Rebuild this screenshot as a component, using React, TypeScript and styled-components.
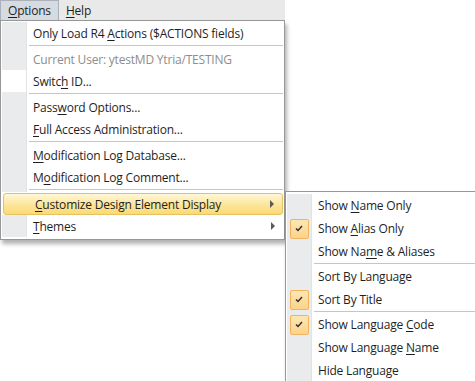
import { FC, ReactNode } from 'react';
import styled, { createGlobalStyle, css } from 'styled-components';

const GlobalStyle = createGlobalStyle`
  html, body {
    margin: 0;
    padding: 0;
    background: #ffffff;
  }

  body {
    font-family: 'Open Sans', 'Noto Sans', sans-serif;
    font-size: 12px;
    letter-spacing: -0.2px;
    color: #1f1f1f;
  }
`;

const Page = styled.div`
  width: 475px;
  height: 381px;
  overflow: hidden;
  position: relative;
`;

const MenuBar = styled.div`
  width: 285px;
  height: 20px;
  display: flex;
  align-items: stretch;
  background: #e9e9e9;
`;

const BarItem = styled.div<{ $open?: boolean }>`
  display: flex;
  align-items: center;
  padding: 0 7px;
  box-sizing: border-box;
  ${(p) =>
    p.$open &&
    css`
      background: #d6dae1;
      border: 1px solid #a9b0ba;
      border-bottom: none;
    `}
`;

const Dropdown = styled.div`
  position: relative;
  width: 285px;
  box-sizing: border-box;
  background: #ffffff;
  border: 1px solid #979797;
  padding: 1px 1px 2px;
  box-shadow: 2px 4px 4px rgba(0, 0, 0, 0.3);
`;

const Row = styled.div<{ $hot?: boolean }>`
  position: relative;
  display: flex;
  height: 22px;
  align-items: stretch;
  ${(p) =>
    p.$hot &&
    css`
      margin: 1px 0 0 1px;
      border: 1px solid #e5c365;
      border-radius: 3px;
      background: linear-gradient(#fff7d6, #fde59a 55%, #fbd974);
      height: 20px;
    `}
`;

const Gutter = styled.div<{ $blank?: boolean; $hot?: boolean }>`
  width: 24px;
  flex: none;
  display: flex;
  align-items: center;
  justify-content: center;
  background: ${(p) => (p.$hot ? 'transparent' : p.$blank ? '#ffffff' : '#e9ebed')};
  border-right: 1px solid ${(p) => (p.$hot ? 'transparent' : '#e2e3e3')};
`;

const Label = styled.div<{ $disabled?: boolean }>`
  flex: 1;
  display: flex;
  align-items: center;
  padding-left: 6px;
  white-space: pre;
  color: ${(p) => (p.$disabled ? '#8d8d8d' : '#1f1f1f')};
`;

const Arrow = styled.span`
  width: 0;
  height: 0;
  margin-right: 8px;
  align-self: center;
  border-top: 4px solid transparent;
  border-bottom: 4px solid transparent;
  border-left: 4px solid #5a5a5a;
`;

const SeparatorRow = styled.div<{ $thin?: boolean }>`
  display: flex;
  height: ${(p) => (p.$thin ? '2px' : '4px')};
`;

const SeparatorLine = styled.div`
  flex: 1;
  margin-left: 2px;
  height: 1px;
  align-self: center;
  border-top: 1px solid #c5c5c5;
`;

const SubMenu = styled.div`
  position: absolute;
  left: 281px;
  top: -3px;
  width: 210px;
  height: 200px;
  background: #ffffff;
  border: 1px solid #979797;
  padding: 2px 1px;
  box-sizing: border-box;
  box-shadow: 2px 4px 4px rgba(0, 0, 0, 0.3);
`;

const SubRow = styled.div`
  display: flex;
  height: 23px;
`;

const CheckBox = styled.div`
  width: 19px;
  height: 20px;
  box-sizing: border-box;
  border: 1px solid #f2b35d;
  border-radius: 2px;
  background: linear-gradient(#fde6b4, #fbd38a);
  display: flex;
  align-items: center;
  justify-content: center;
`;

const Key = styled.span`
  text-decoration: underline;
  text-underline-offset: 2px;
`;

const Check: FC = () => (
  <CheckBox>
    <svg width='8' height='7' viewBox='0 0 8 7'>
      <path d='M1 3.5 L3 5.5 L7 1' fill='none' stroke='#2b2b2b' strokeWidth='1.4' />
    </svg>
  </CheckBox>
);

type ItemProps = {
  children: ReactNode;
  disabled?: boolean;
  blank?: boolean;
  arrow?: boolean;
  hot?: boolean;
  sub?: ReactNode;
};

const Item: FC<ItemProps> = ({ children, disabled, blank, arrow, hot, sub }) => (
  <Row $hot={hot}>
    <Gutter $blank={blank} $hot={hot} />
    <Label $disabled={disabled}>
      <span>{children}</span>
    </Label>
    {arrow && <Arrow />}
    {sub}
  </Row>
);

const Separator: FC<{ thin?: boolean }> = ({ thin }) => (
  <SeparatorRow $thin={thin}>
    <Gutter />
    <SeparatorLine />
  </SeparatorRow>
);

const SubItem: FC<{ children: ReactNode; checked?: boolean }> = ({ children, checked }) => (
  <SubRow>
    <Gutter>{checked && <Check />}</Gutter>
    <Label>
      <span>{children}</span>
    </Label>
  </SubRow>
);

const DesignSubMenu: FC = () => (
  <SubMenu>
    <SubItem>Show <Key>N</Key>ame Only</SubItem>
    <SubItem checked>Show <Key>A</Key>lias Only</SubItem>
    <SubItem>Show Na<Key>m</Key>e &amp; Aliases</SubItem>
    <Separator thin />
    <SubItem>Sort By Language</SubItem>
    <SubItem checked>Sort By Title</SubItem>
    <Separator thin />
    <SubItem checked>Show Language <Key>C</Key>ode</SubItem>
    <SubItem>Show Language <Key>N</Key>ame</SubItem>
    <SubItem>Hide Language</SubItem>
  </SubMenu>
);

const App: FC = () => (
  <Page>
    <GlobalStyle />
    <MenuBar>
      <BarItem $open><Key>O</Key>ptions</BarItem>
      <BarItem><Key>H</Key>elp</BarItem>
    </MenuBar>
    <Dropdown>
      <Item>Only Load R4 <Key>A</Key>ctions ($ACTIONS fields)</Item>
      <Separator />
      <Item disabled>Current User: ytestMD Ytria/TESTING</Item>
      <Item blank>Switc<Key>h</Key> ID...</Item>
      <Separator />
      <Item>Pass<Key>w</Key>ord Options...</Item>
      <Item><Key>F</Key>ull Access Administration...</Item>
      <Separator />
      <Item><Key>M</Key>odification Log Database...</Item>
      <Item>M<Key>o</Key>dification Log Comment...</Item>
      <Separator />
      <Item hot arrow sub={<DesignSubMenu />}>
        <Key>C</Key>ustomize Design Element Display
      </Item>
      <Item arrow><Key>T</Key>hemes</Item>
    </Dropdown>
  </Page>
);

export default App;
